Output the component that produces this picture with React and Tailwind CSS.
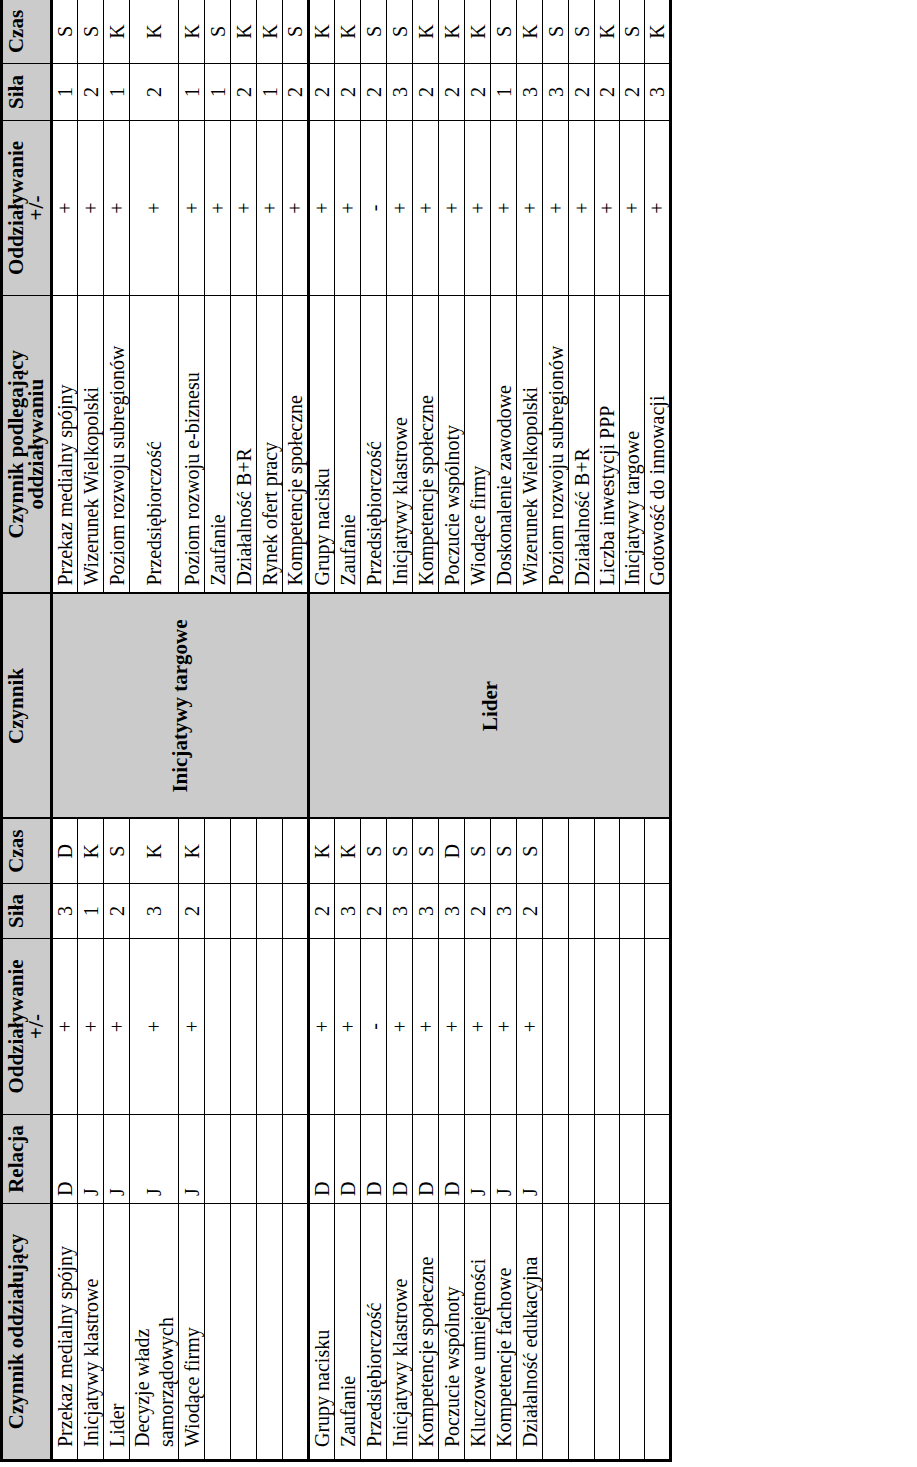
import React from "react";

const group1 = [
	["Przekaz medialny spójny", "D", "+", "3", "D", "Przekaz medialny spójny", "+", "1", "S"],
	["Inicjatywy klastrowe", "J", "+", "1", "K", "Wizerunek Wielkopolski", "+", "2", "S"],
	["Lider", "J", "+", "2", "S", "Poziom rozwoju subregionów", "+", "1", "K"],
	[["Decyzje władz", "samorządowych"], "J", "+", "3", "K", "Przedsiębiorczość", "+", "2", "K"],
	["Wiodące firmy", "J", "+", "2", "K", "Poziom rozwoju e-biznesu", "+", "1", "K"],
	["", "", "", "", "", "Zaufanie", "+", "1", "S"],
	["", "", "", "", "", "Działalność B+R", "+", "2", "K"],
	["", "", "", "", "", "Rynek ofert pracy", "+", "1", "K"],
	["", "", "", "", "", "Kompetencje społeczne", "+", "2", "S"],
];

const group2 = [
	["Grupy nacisku", "D", "+", "2", "K", "Grupy nacisku", "+", "2", "K"],
	["Zaufanie", "D", "+", "3", "K", "Zaufanie", "+", "2", "K"],
	["Przedsiębiorczość", "D", "-", "2", "S", "Przedsiębiorczość", "-", "2", "S"],
	["Inicjatywy klastrowe", "D", "+", "3", "S", "Inicjatywy klastrowe", "+", "3", "S"],
	["Kompetencje społeczne", "D", "+", "3", "S", "Kompetencje społeczne", "+", "2", "K"],
	["Poczucie wspólnoty", "D", "+", "3", "D", "Poczucie wspólnoty", "+", "2", "K"],
	["Kluczowe umiejętności", "J", "+", "2", "S", "Wiodące firmy", "+", "2", "K"],
	["Kompetencje fachowe", "J", "+", "3", "S", "Doskonalenie zawodowe", "+", "1", "S"],
	["Działalność edukacyjna", "J", "+", "2", "S", "Wizerunek Wielkopolski", "+", "3", "K"],
	["", "", "", "", "", "Poziom rozwoju subregionów", "+", "3", "S"],
	["", "", "", "", "", "Działalność B+R", "+", "2", "S"],
	["", "", "", "", "", "Liczba inwestycji PPP", "+", "2", "K"],
	["", "", "", "", "", "Inicjatywy targowe", "+", "2", "S"],
	["", "", "", "", "", "Gotowość do innowacji", "+", "3", "K"],
];

const td = "border border-black p-0 align-middle";
const th = "border border-black border-b-[3px] bg-[#cbcbcb] px-1 pt-[3px] align-top text-center font-bold text-[21px] leading-[20px]";

function Group({ rows, label, first }) {
	return rows.map((r, i) => {
		const top = i === 0 && !first ? "border-t-[3px]" : "";
		let h = "h-[26px]";
		if (Array.isArray(r[0])) h = "h-[48px]";
		else if (!first && i >= rows.length - 3) h = "h-[25px]";
		return (
			<tr key={i} className={h}>
				<td className={`${td} ${top} pl-[12px] whitespace-nowrap`}>
					{Array.isArray(r[0]) ? <>{r[0][0]}<br />{r[0][1]}</> : r[0]}
				</td>
				<td className={`${td} ${top} pl-[7px]`}>{r[1]}</td>
				<td className={`${td} ${top} text-center`}>{r[2]}</td>
				<td className={`${td} ${top} text-center`}>{r[3]}</td>
				<td className={`${td} ${top} text-center`}>{r[4]}</td>
				{i === 0 && (
					<td rowSpan={rows.length} className={`${td} ${top} border-x-2 bg-[#cbcbcb] text-center font-bold text-[21px]`}>
						{label}
					</td>
				)}
				<td className={`${td} ${top} pl-[7px] whitespace-nowrap`}>{r[5]}</td>
				<td className={`${td} ${top} text-center`}>{r[6]}</td>
				<td className={`${td} ${top} text-center`}>{r[7]}</td>
				<td className={`${td} ${top} text-center`}>{r[8]}</td>
			</tr>
		);
	});
}

export default function App() {
	return (
		<div className="w-[917px] h-[1467px] overflow-hidden bg-white">
			<div className="w-[1462px] origin-top-left [transform:translateY(1462px)_rotate(-90deg)]">
				<table className="w-[1462px] table-fixed border-collapse border-[3px] border-black text-black text-[20px] leading-[24px] font-['Liberation_Serif',serif]">
					<colgroup>
						<col className="w-[257px]" />
						<col className="w-[89px]" />
						<col className="w-[176px]" />
						<col className="w-[55px]" />
						<col className="w-[65px]" />
						<col className="w-[225px]" />
						<col className="w-[298px]" />
						<col className="w-[175px]" />
						<col className="w-[57px]" />
						<col className="w-[65px]" />
					</colgroup>
					<thead>
						<tr className="h-[50px]">
							<th className={th}>Czynnik oddziałujący</th>
							<th className={th}>Relacja</th>
							<th className={th}>Oddziaływanie<br />+/-</th>
							<th className={th}>Siła</th>
							<th className={th}>Czas</th>
							<th className={`${th} border-x-2`}>Czynnik</th>
							<th className={th}>Czynnik podlegający<br />oddziaływaniu</th>
							<th className={th}>Oddziaływanie<br />+/-</th>
							<th className={th}>Siła</th>
							<th className={th}>Czas</th>
						</tr>
					</thead>
					<tbody>
						<Group rows={group1} label="Inicjatywy targowe" first />
						<Group rows={group2} label="Lider" />
					</tbody>
				</table>
			</div>
		</div>
	);
}
